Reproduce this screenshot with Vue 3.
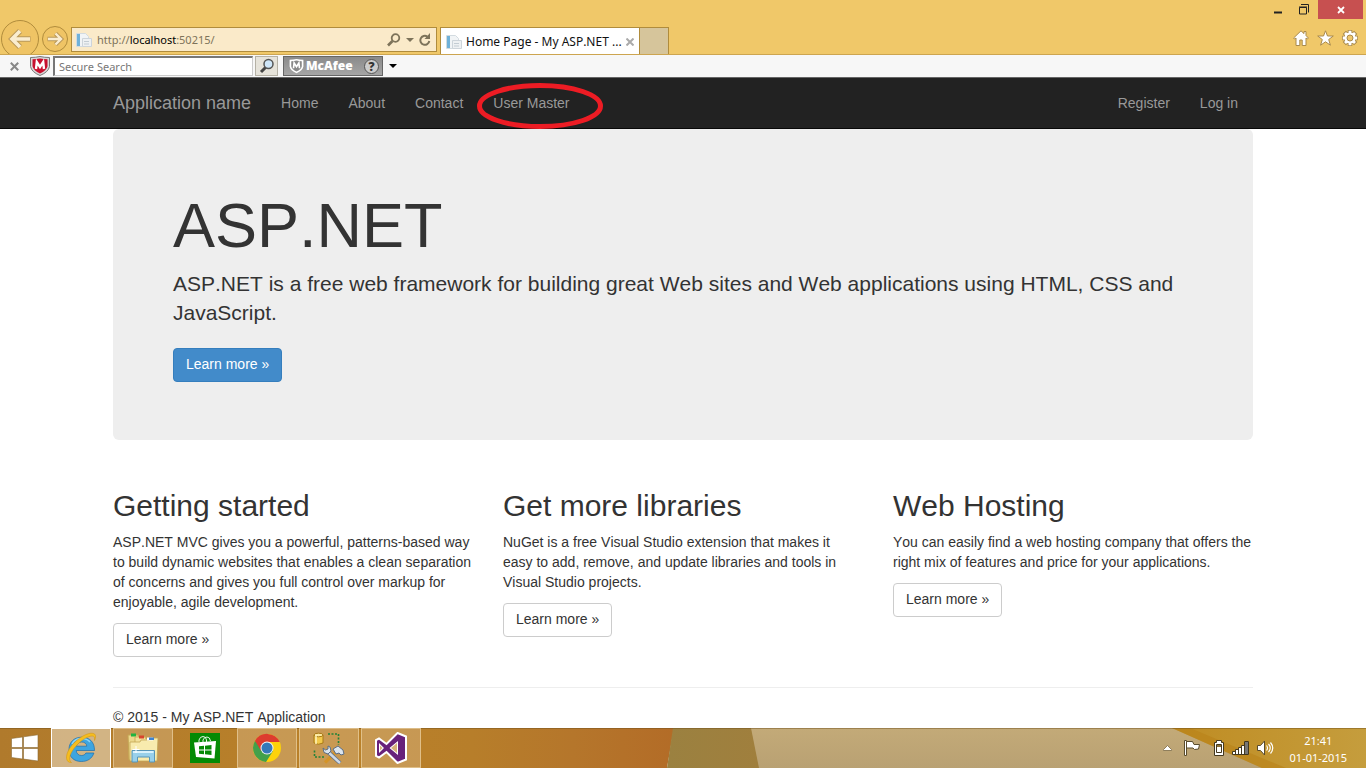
<template>
  <div class="screen">
    <header class="browser">
      <div class="window-buttons">
        <button class="win-btn" aria-label="Minimize">
          <svg width="8" height="9" viewBox="0 0 8 9"><path d="M0 7.500h8" stroke="#222" stroke-width="2" /></svg>
        </button>
        <button class="win-btn" aria-label="Restore">
          <svg width="10" height="11" viewBox="0 0 10 11" fill="none" stroke="#222">
            <path d="M2 .5h7.500v8" />
            <path d="M.5 3.500h7v6.500h-7z" />
            <path d="M0 3h8" />
          </svg>
        </button>
        <button class="win-btn close" aria-label="Close">
          <svg width="8" height="8" viewBox="0 0 8 8"><path d="M1 1l6 6M7 1L1 7" stroke="#fff" stroke-width="1.800" /></svg>
        </button>
      </div>
      <div class="address-row">
        <button class="nav-btn" aria-label="Back">
          <svg width="40" height="36" viewBox="0 0 40 36" fill="none">
            <circle cx="20" cy="21" r="18.500" fill="#efc465" stroke="#b08c3c" />
            <path d="M20 13l-8 8 8 8M12 21h18.500" stroke="#b9985a" stroke-width="5.600" />
            <path d="M20 13l-8 8 8 8M12 21h18" stroke="#faedd0" stroke-width="3.600" />
          </svg>
        </button>
        <button class="nav-btn" aria-label="Forward">
          <svg width="28" height="28" viewBox="0 0 28 28" fill="none">
            <circle cx="14" cy="13" r="12.500" fill="#efc465" stroke="#b08c3c" />
            <path d="M14.500 7.500L20 13l-5.500 5.500M20 13H6.500" stroke="#b9985a" stroke-width="4.400" />
            <path d="M14.500 7.500L20 13l-5.500 5.500M20 13H7" stroke="#faedd0" stroke-width="2.400" />
          </svg>
        </button>
        <div class="address">
          <svg width="16" height="16" viewBox="0 0 16 16">
            <path d="M.5 1.500h9l3 3v10H.5z" fill="#f1f4f6" stroke="#d3dbe0" />
            <path d="M1 2h3v12H1z" fill="#6fb1d9" />
            <path d="M6.500 6.500h9v8h-9z" fill="#eef1f3" stroke="#cdd4da" />
            <path d="M8 9.500h5M8 12h5" stroke="#c3ccd3" />
          </svg>
          <span class="url">http://<b>localhost</b>:50215/</span>
          <button class="plain" aria-label="Search">
            <svg width="14" height="14" viewBox="0 0 14 14" fill="none" stroke="#7d735a">
              <circle cx="8.500" cy="5" r="3.800" stroke-width="1.800" />
              <path d="M5.500 8L1 12.500" stroke-width="2.600" />
            </svg>
          </button>
          <button class="plain" aria-label="Show addresses">
            <svg width="8" height="4" viewBox="0 0 8 4"><path d="M0 0h8L4 4z" fill="#7d735a" /></svg>
          </button>
          <button class="plain" aria-label="Refresh">
            <svg width="12" height="14" viewBox="0 0 12 14">
              <path d="M10.300 8a4.500 4.500 0 1 1-2-4.500" fill="none" stroke="#7d735a" stroke-width="2" />
              <path d="M11 0v6H5.500z" fill="#7d735a" />
            </svg>
          </button>
        </div>
        <div class="tab">
          <svg width="16" height="16" viewBox="0 0 16 16">
            <path d="M.5 1.500h9l3 3v10H.5z" fill="#f1f4f6" stroke="#d3dbe0" />
            <path d="M1 2h3v12H1z" fill="#6fb1d9" />
            <path d="M6.500 6.500h9v8h-9z" fill="#eef1f3" stroke="#cdd4da" />
            <path d="M8 9.500h5M8 12h5" stroke="#c3ccd3" />
          </svg>
          <span class="tab-title">Home Page - My ASP.NET ...</span>
          <button class="plain" aria-label="Close tab">
            <svg width="8" height="8" viewBox="0 0 8 8"><path d="M.5.5l7 7M7.500.5l-7 7" stroke="#aaa" stroke-width="2" /></svg>
          </button>
        </div>
        <button class="new-tab" aria-label="New tab"></button>
        <div class="tools">
          <button class="plain" aria-label="Home">
            <svg width="16" height="16" viewBox="0 0 16 16">
              <path d="M8 .8L.6 8l1 1L3 8v7.500h3.800V10h2.400v5.500H13V8l1.400 1 1-1L13 5.500V1.500h-2V3.600z" fill="#fff" stroke="#a98a4c" />
            </svg>
          </button>
          <button class="plain" aria-label="Favorites">
            <svg width="17" height="16" viewBox="0 0 17 16">
              <path d="M8.500.8l2 5.200h5.800l-4.600 3.500 1.700 5.700-4.900-3.400-4.900 3.400 1.700-5.700L.7 6h5.800z" fill="#fff" stroke="#a98a4c" />
            </svg>
          </button>
          <button class="plain" aria-label="Settings">
            <svg width="16" height="16" viewBox="0 0 16 16">
              <g stroke="#a98a4c" stroke-width="4.600"><path d="M8 0v16M0 8h16M2.300 2.300l11.400 11.400M13.700 2.300L2.300 13.700" /></g>
              <circle cx="8" cy="8" r="6" fill="#fff" stroke="#a98a4c" />
              <g stroke="#fff" stroke-width="2.800"><path d="M8 .8v14.400M.8 8h14.400M3 3l10 10M13 3L3 13" /></g>
              <circle cx="8" cy="8" r="3" fill="#efc76b" stroke="#a98a4c" />
            </svg>
          </button>
        </div>
      </div>
    </header>

    <div class="toolbar">
      <button class="plain toolbar-close" aria-label="Close toolbar">
        <svg width="9" height="9" viewBox="0 0 9 9"><path d="M.8.8l7.400 7.400M8.200.8L.8 8.200" stroke="#888" stroke-width="2" /></svg>
      </button>
      <svg class="shield" width="20" height="20" viewBox="0 0 20 20">
        <path d="M.5 1.500q5 0 9.500-1 4.500 1 9.500 1v9q-1 5.500-9.500 9-8.500-3.500-9.500-9z" fill="#d8d8d8" stroke="#777" />
        <path d="M2.500 3.300q4 0 7.500-.8 3.500.8 7.500.8v7q-1 4.500-7.500 7.200-6.500-2.700-7.500-7.200z" fill="#c8102e" />
        <path d="M6 13l.8-7L10 11l3.200-5 .8 7" fill="none" stroke="#fff" stroke-width="2.400" />
      </svg>
      <input class="secure-search" type="text" placeholder="Secure Search" aria-label="Secure Search" />
      <button class="search-btn" aria-label="Search">
        <svg width="16" height="16" viewBox="0 0 16 16">
          <path d="M6.500 9.500L2 14" stroke="#444" stroke-width="3" />
          <circle cx="9.500" cy="6" r="4.500" fill="#cfe6f8" stroke="#555" stroke-width="1.500" />
        </svg>
      </button>
      <button class="mcafee">
        <svg width="15" height="16" viewBox="0 0 20 20">
          <path d="M.8 1.500q5 0 9.200-1 4.200 1 9.200 1v9q-1 5.500-9.200 9-8.200-3.500-9.200-9z" fill="#fff" />
          <path d="M3 3.500q4 0 7-.7 3 .7 7 .7v7q-1 4-7 6.700-6-2.700-7-6.700z" fill="#888" />
          <path d="M6 13l.8-7L10 11l3.200-5 .8 7" fill="none" stroke="#fff" stroke-width="2.200" />
        </svg>
        <span>McAfee</span>
        <i>?</i>
      </button>
      <button class="plain" aria-label="More">
        <svg width="8" height="4" viewBox="0 0 8 4"><path d="M0 0h8L4 4z" fill="#000" /></svg>
      </button>
    </div>

    <nav class="navbar">
      <div class="container nav-inner">
        <a class="brand" href="#">Application name</a>
        <a v-for="link in navLinks" :key="link.text" href="#" :class="{ marked: link.marked }">
          {{ link.text }}
          <svg v-if="link.marked" class="marker" width="126" height="46" viewBox="0 0 126 46">
            <ellipse cx="63" cy="23" rx="60.500" ry="20.500" fill="none" stroke="#ed1c24" stroke-width="5" />
          </svg>
        </a>
        <span class="spacer"></span>
        <a href="#">Register</a>
        <a href="#">Log in</a>
      </div>
    </nav>

    <main class="container">
      <section class="jumbotron">
        <h1>ASP.NET</h1>
        <p>ASP.NET is a free web framework for building great Web sites and Web applications using HTML, CSS and JavaScript.</p>
        <a class="btn primary" href="#">Learn more »</a>
      </section>
      <section class="row">
        <article v-for="item in columns" :key="item.title">
          <h2>{{ item.title }}</h2>
          <p>{{ item.text }}</p>
          <a class="btn" href="#">Learn more »</a>
        </article>
      </section>
      <footer>© 2015 - My ASP.NET Application</footer>
    </main>

    <div class="taskbar">
      <svg class="wallpaper" viewBox="0 0 1366 40" preserveAspectRatio="none">
        <defs>
          <linearGradient id="gold"><stop offset="0" stop-color="#b07a2c" /><stop offset=".5" stop-color="#ba8129" /><stop offset=".7" stop-color="#b77e2a" /><stop offset=".85" stop-color="#b5762b" /><stop offset="1" stop-color="#b36c27" /></linearGradient>
          <linearGradient id="olive"><stop offset="0" stop-color="#9b8140" /><stop offset="1" stop-color="#a07f3d" /></linearGradient>
          <linearGradient id="sand" x2="0" y2="1"><stop offset="0" stop-color="#c3aa78" /><stop offset="1" stop-color="#b9a173" /></linearGradient>
          <linearGradient id="amber" x2="1" y2="0"><stop offset="0" stop-color="#bf8c22" /><stop offset="1" stop-color="#c59d3d" /></linearGradient>
        </defs>
        <path d="M0 0h674l-7 40H0z" fill="url(#gold)" />
        <path d="M673 0h79l8 40h-93z" fill="url(#olive)" />
        <path d="M751 0h615v40H759z" fill="url(#sand)" />
        <path d="M1172 0h194v40h-104z" fill="url(#amber)" />
        <path d="M1172 0h18l96 40h-24z" fill="#b98219" opacity=".6" />
        <path d="M0 .5h1366" stroke="#70501c" opacity=".45" />
      </svg>
      <button class="start" aria-label="Start">
        <svg width="28" height="28" viewBox="0 0 28 28">
          <path d="M.5 4.500L11.500 3v10.500H.5zM12.500 2.800L27 .8v12.700H12.500zM.5 14.500h11V25l-11-1.500zM12.500 14.500H27V27l-14.500-1.900z" fill="#fff" stroke="#8a6a34" stroke-width=".6" />
        </svg>
      </button>
      <button class="task active" aria-label="Internet Explorer">
        <svg width="32" height="32" viewBox="0 0 32 32">
          <path d="M29.500 18.500H11.200c.2 3 2.300 5 5.200 5 2.100 0 3.700-.8 4.500-2.500h8c-1.800 5.500-6.200 8.500-12.600 8.500C8.800 29.500 4 24.800 4 17.500S9 5.200 16.600 5.200c8.200 0 13 5 12.900 13.300zM11.400 14.200h10.400c-.2-2.600-2.300-4.200-5.100-4.200s-4.900 1.700-5.300 4.200z" fill="#3ea5e0" stroke="#1b6fae" stroke-width=".7" />
          <path d="M7 12c2-4 6-5.500 9.500-5.500 3.500 0 6.500 1 8.500 3.500" fill="none" stroke="#8ed5f7" stroke-width="1.500" />
          <path d="M6.500 30.500C-1 31 0 20 9 11 16 3.800 26-1 29.800 2.200c1.300 1.600.8 4-.3 6.300.2-2 .2-3.600-1-4.200C25 3 17.500 7 11.500 13.500 5 20.500 2.500 28 6.500 30.500z" fill="#f5bd20" stroke="#d2920d" stroke-width=".5" />
        </svg>
      </button>
      <button class="task" aria-label="File Explorer">
        <svg width="32" height="32" viewBox="0 0 32 32">
          <path d="M1 3h10l1 2h7v23H2z" fill="#ecd88c" stroke="#c4a654" />
          <path d="M4 1.500h5v3H4z" fill="#1fb441" />
          <path d="M8 5h10l1 2h7v21H8z" fill="#f3e19b" stroke="#c4a654" stroke-width=".8" />
          <path d="M12 3.500h5v3h-5z" fill="#d8452e" />
          <path d="M14 8h8l1-2h8l-1 23H3V10h10z" fill="#f8ebae" stroke="#c4a654" stroke-width=".8" />
          <path d="M20 5.500h6v3h-6z" fill="#fff" /><path d="M22 5.500h5v2.500h-5z" fill="#3e82d0" />
          <path d="M5 18.500h22.500V30h-5v-5h-12v5H5z" fill="#98d0ea" stroke="#5796b9" />
          <path d="M6 20h20.500" stroke="#d9f2fc" stroke-width="2" />
          <path d="M9 14v7M5.500 17.500h7" stroke="#fff" />
        </svg>
      </button>
      <button class="task flat" aria-label="Store">
        <svg width="30" height="30" viewBox="0 0 30 30">
          <path d="M0 0h30v30H0z" fill="#048a04" />
          <path d="M4 9.500l22-1.500-1.500 17.500L6 24z" fill="#fff" />
          <path d="M9 9V7q1-3.500 4-3.500T16.500 7v2M13 9V7q1-3 4-3t3.500 4" fill="none" stroke="#e9f5e9" />
          <path d="M9 13.200l5-.4v3.700H9zM15 12.700l6.500-.6v4.400H15zM9 17.500h5v3.700l-5-.4zM15 17.500h6.500V22l-6.500-.7z" fill="#048a04" />
        </svg>
      </button>
      <button class="task" aria-label="Chrome">
        <svg width="30" height="30" viewBox="0 0 30 30">
          <circle cx="15" cy="15" r="14" fill="#fdd20a" />
          <path d="M15 15L2.900 8A14 14 0 0 0 14 29l7-11z" fill="#42a04b" />
          <path d="M15 15L2.900 8A14 14 0 0 1 27.800 9H15z" fill="#dd3b2f" />
          <path d="M3 8l6 10 6-9z" fill="#dd3b2f" />
          <path d="M3 8l6 10.500-1 2z" fill="#42a04b" />
          <circle cx="15" cy="15" r="6.500" fill="#f5f5f5" />
          <circle cx="15" cy="15" r="5.500" fill="#3578ba" />
        </svg>
      </button>
      <button class="task" aria-label="SQL Server tools">
        <svg width="32" height="32" viewBox="0 0 32 32">
          <path d="M1 3v8q4.500 2.500 9 0V3z" fill="#f2c94b" stroke="#a97a16" />
          <ellipse cx="5.500" cy="3" rx="4.500" ry="1.800" fill="#fbe9a0" stroke="#a97a16" />
          <path d="M3 3v9" stroke="#fff3b8" stroke-width="1.500" />
          <path d="M15 2h10.500v11M1.500 18.500V25H12" fill="none" stroke="#23823a" stroke-width="1.600" stroke-dasharray="2 1.500" />
          <path d="M12 30.500L25 18" stroke="#d49428" stroke-width="3.200" />
          <path d="M20 17l5-3 5 4 1 4-3 1-2-2-3 1z" fill="#dce5ee" stroke="#5c6e84" />
          <path d="M14 19l13 12" stroke="#5f7188" stroke-width="4" />
          <path d="M14 19l13 12" stroke="#cfdae6" stroke-width="2.400" />
          <path d="M10 16l1 4.500 4 1.500 3-3-1-4-2-1v3l-2.500 1z" fill="#dce5ee" stroke="#5c6e84" />
        </svg>
      </button>
      <button class="task" aria-label="Visual Studio">
        <svg width="34" height="32" viewBox="0 0 34 32">
          <path d="M23.500 1l8.500 3.500v23L23.500 31 12.500 20 5 25.500 2 24V8l3-1.500L12.500 12z" fill="#68217a" stroke="#fff" stroke-width="2" />
          <path d="M5 11v10l5-5zM15.500 16l8.500 7V9z" fill="#fff" />
          <path d="M23 11l-6 5 6 5z" fill="#d6b07a" />
          <path d="M6 13.500v5L8.500 16z" fill="#d6b07a" />
        </svg>
      </button>
      <div class="tray">
        <svg class="tray-up" width="9" height="6" viewBox="0 0 9 6"><path d="M.5 5.500v-1l4-4 4 4v1z" fill="#fff" stroke="#7a6844" stroke-width=".8" /></svg>
        <svg class="tray-flag" width="16" height="16" viewBox="0 0 16 16">
          <path d="M.5.5h2v15h-2z" fill="#fff" stroke="#5a4c2d" />
          <path d="M2.500 1.500h6l1.500 3h5.500l-1 4.500-4 .5L9 8H2.500z" fill="#fff" stroke="#5a4c2d" />
        </svg>
        <svg class="tray-battery" width="10" height="16" viewBox="0 0 10 16">
          <path d="M.5 2.500h2v-2h5v2h2v13h-9z" fill="#fff" stroke="#43381f" />
          <path d="M2.500 4.500h5v8h-5z" fill="#fff" stroke="#43381f" />
          <path d="M3 5h4v2H3z" fill="#8d7137" />
        </svg>
        <svg class="tray-signal" width="17" height="14" viewBox="0 0 17 14">
          <path d="M.5 13.500v-3h3v-2h3v-2h3v-2h3v-4h4v13z" fill="#fff" stroke="#43381f" />
          <path d="M3.500 10v4M6.500 8v6M9.500 6v8M12.500 4v10" stroke="#43381f" />
          <path d="M13 1h3v12h-3z" fill="#777" />
        </svg>
        <svg class="tray-sound" width="17" height="16" viewBox="0 0 17 16">
          <path d="M.5 5.500h3L7.500 1v14l-4-4.500h-3z" fill="#fff" stroke="#5a4c2d" />
          <path d="M9.500 5.500q2 2.500 0 5M11.500 4q3.500 4 0 8M13.500 2.500q4.500 5.500 0 11" fill="none" stroke="#fff" stroke-width="1.200" />
        </svg>
        <div class="clock">
          <span>21:41</span>
          <span>01-01-2015</span>
        </div>
      </div>
    </div>
  </div>
</template>

<script setup>
const navLinks = [
  { text: 'Home' },
  { text: 'About' },
  { text: 'Contact' },
  { text: 'User Master', marked: true },
];

const columns = [
  {
    title: 'Getting started',
    text: 'ASP.NET MVC gives you a powerful, patterns-based way to build dynamic websites that enables a clean separation of concerns and gives you full control over markup for enjoyable, agile development.',
  },
  {
    title: 'Get more libraries',
    text: 'NuGet is a free Visual Studio extension that makes it easy to add, remove, and update libraries and tools in Visual Studio projects.',
  },
  {
    title: 'Web Hosting',
    text: 'You can easily find a web hosting company that offers the right mix of features and price for your applications.',
  },
];
</script>

<style>
body {
  margin: 0;
  background: #fff;
}
</style>

<style scoped>
* {
  box-sizing: border-box;
}
.screen {
  min-height: 100vh;
  display: flex;
  flex-direction: column;
  font-family: "Liberation Sans", Arial, sans-serif;
  font-size: 14px;
  font-kerning: none;
  line-height: 20px;
  color: #333;
}
svg {
  display: block;
  flex: none;
}
button {
  font: inherit;
  padding: 0;
  border: none;
  background: none;
}
.browser, .toolbar, .clock {
  font-family: "Noto Sans", "Open Sans", sans-serif;
  font-size: 11px;
}
.browser {
  background: #f0c869;
  border-bottom: 1px solid #cda550;
}
.window-buttons {
  height: 27px;
  display: flex;
  justify-content: flex-end;
}
.win-btn {
  width: 26px;
  height: 19px;
  display: flex;
  align-items: center;
  justify-content: center;
}
.win-btn.close {
  width: 45px;
  margin: 0 3px 0 1px;
  background: #c75050;
}
.address-row {
  height: 27px;
  display: flex;
  align-items: flex-end;
}
.nav-btn {
  margin-right: 1px;
}
.address {
  flex: 0 1 366px;
  height: 25px;
  margin: 0 3px 2px 1px;
  padding: 0 5px 0 4px;
  display: flex;
  align-items: center;
  gap: 5px;
  background: #faeac9;
  border: 1px solid #b08c3c;
}
.url {
  flex: 1;
  color: #7d735a;
}
.url b {
  font-weight: normal;
  color: #000;
}
.tab {
  flex: 0 1 200px;
  height: 27px;
  padding: 1px 5px 0;
  display: flex;
  align-items: center;
  gap: 4px;
  white-space: nowrap;
  background: #fff;
  border: 1px solid #b08c3c;
  border-bottom: none;
  color: #111;
  font-size: 12px;
}
.tab-title {
  flex: 1;
  overflow: hidden;
}
.new-tab {
  width: 29px;
  height: 27px;
  background: #d6c59b;
  border: 1px solid #b08c3c;
  border-width: 1px 1px 0 0;
}
.tools {
  margin: 0 8px 8px auto;
  display: flex;
  gap: 8px;
}
.toolbar {
  height: 23px;
  padding-left: 10px;
  display: flex;
  align-items: center;
  background: #f7f7f7;
  border-bottom: 1px solid #666;
}
.shield {
  margin: 0 3px 0 11px;
}
.secure-search {
  width: 200px;
  height: 20px;
  padding: 0 4px;
  border: 1px solid #ccc;
  border-top: 2px solid #777;
  border-left: 2px solid #777;
  background: #fff;
  font: inherit;
}
.secure-search::placeholder {
  color: #777;
}
.search-btn {
  width: 23px;
  height: 20px;
  margin: 0 5px 0 2px;
  display: flex;
  align-items: center;
  justify-content: center;
  background: #e6e3da;
  border: 1px solid #b5b1a5;
}
.mcafee {
  width: 100px;
  height: 20px;
  margin-right: 6px;
  padding: 0 3px 0 5px;
  display: flex;
  align-items: center;
  gap: 2px;
  background: linear-gradient(#8a8a8a, #a5a5a5);
  border: 1px solid #666;
  color: #fff;
  font-family: "Open Sans", sans-serif;
  font-size: 12px;
  font-weight: 800;
}
.mcafee span {
  flex: 1;
  text-align: left;
}
.mcafee i {
  width: 15px;
  height: 15px;
  line-height: 13px;
  border: 1px solid #555;
  border-radius: 50%;
  background: #ccc;
  color: #333;
  font-style: normal;
}
.container {
  width: 100%;
  max-width: 1140px;
  margin: 0 auto;
}
.navbar {
  background: #222;
  border-bottom: 1px solid #080808;
}
.nav-inner {
  height: 50px;
  display: flex;
  align-items: center;
}
.nav-inner a {
  padding: 0 15px;
  color: #999;
  text-decoration: none;
}
.nav-inner .brand {
  padding-left: 0;
  font-size: 18px;
}
.marked {
  position: relative;
}
.marker {
  position: absolute;
  left: -1px;
  top: -10px;
}
.spacer {
  flex: 1;
}
main {
  flex: 1;
}
.jumbotron {
  padding: 65px 60px 58px;
  background: #eee;
  border-radius: 6px;
}
h1, h2 {
  margin: 0 0 10px;
  font-weight: normal;
}
h1 {
  margin-bottom: 12px;
  font-size: 63px;
  line-height: 63px;
}
.jumbotron p {
  margin: 0 0 21px;
  font-size: 21px;
  line-height: 29px;
}
.btn {
  display: inline-block;
  height: 34px;
  padding: 5px 12px 7px;
  vertical-align: top;
  background: #fff;
  border: 1px solid #ccc;
  border-radius: 4px;
  color: #333;
  text-decoration: none;
}
.btn.primary {
  background: #428bca;
  border-color: #357ebd;
  color: #fff;
}
.row {
  margin-top: 49px;
  padding-bottom: 30px;
  display: grid;
  grid-template-columns: repeat(3, 1fr);
  gap: 30px;
  border-bottom: 1px solid #eee;
}
h2 {
  font-size: 30px;
  line-height: 33px;
}
.row p {
  margin: 0 0 11px;
}
footer {
  margin-top: 19px;
}
.taskbar {
  position: relative;
  height: 40px;
  display: flex;
  gap: 2px;
}
.wallpaper {
  position: absolute;
  width: 100%;
  height: 100%;
}
.start, .task {
  position: relative;
  display: flex;
  align-items: center;
  justify-content: center;
}
.start {
  width: 49px;
}
.task {
  width: 60px;
  background: rgba(213, 178, 125, .5);
  border: 1px solid rgba(235, 208, 160, .7);
}
.task.active {
  background: rgba(218, 194, 155, .8);
  border-color: #fff;
}
.task.flat {
  background: none;
  border-color: transparent;
}
.tray {
  position: relative;
  margin-left: auto;
  margin-right: 19px;
  display: flex;
  align-items: center;
}
.tray-up {
  margin-right: 12px;
}
.tray-flag {
  margin-right: 14px;
}
.tray-battery, .tray-signal {
  margin-right: 8px;
}
.tray-sound {
  margin-right: 16px;
}
.clock {
  padding-top: 2px;
  display: flex;
  flex-direction: column;
  align-items: center;
  line-height: 17px;
  color: #fff;
}
</style>
